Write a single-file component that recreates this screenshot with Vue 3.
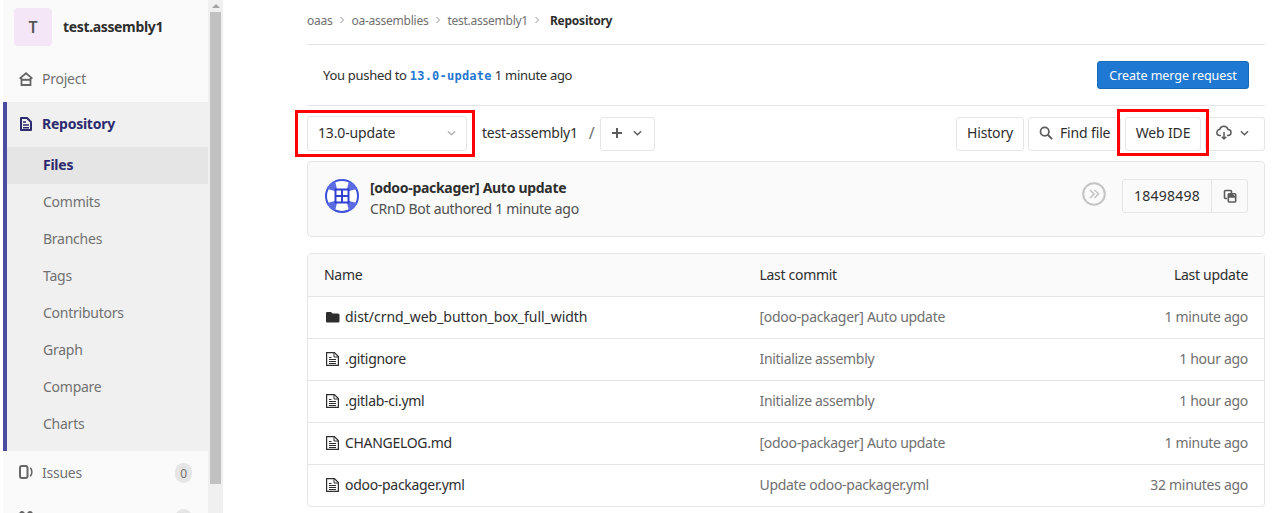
<script setup>
const subItems = ['Commits', 'Branches', 'Tags', 'Contributors', 'Graph', 'Compare', 'Charts']
const rows = [
  { name: 'dist/crnd_web_button_box_full_width', folder: true, commit: '[odoo-packager] Auto update', time: '1 minute ago' },
  { name: '.gitignore', commit: 'Initialize assembly', time: '1 hour ago' },
  { name: '.gitlab-ci.yml', commit: 'Initialize assembly', time: '1 hour ago' },
  { name: 'CHANGELOG.md', commit: '[odoo-packager] Auto update', time: '1 minute ago' },
  { name: 'odoo-packager.yml', commit: 'Update odoo-packager.yml', time: '32 minutes ago' },
]
</script>

<template>
  <div class="page">
    <aside class="sidebar">
      <div class="nav">
        <div class="context">
          <div class="avatar">T</div>
          <div class="ctx-name">test.assembly1</div>
        </div>
        <div class="item">
          <svg class="nav-icon" viewBox="0 0 14 14"><path fill="none" stroke="currentColor" stroke-width="1.8" d="M.6 6.600 7 1.200l6.400 5.400M2.500 6v7h9V6"/><path fill="currentColor" d="M3 6.800h8v2H3z"/></svg>
          <span>Project</span>
        </div>
        <div class="active-group">
          <div class="item repo">
            <svg class="nav-icon" viewBox="0 0 14 14"><path fill="none" stroke="currentColor" stroke-width="2" stroke-linejoin="round" d="M2 1h6l4 4v8H2z"/><path fill="currentColor" d="M4 7.200h6v1.600H4zM4 10h6v1.600H4zM4 4.200h3v1.600H4z"/></svg>
            <span>Repository</span>
          </div>
          <div class="sub current">Files</div>
          <div v-for="s in subItems" :key="s" class="sub">{{ s }}</div>
        </div>
        <div class="item issues">
          <svg class="nav-icon" viewBox="0 0 14 14"><rect x="1" y="1" width="7.500" height="12" rx="2" fill="none" stroke="currentColor" stroke-width="2"/><path fill="none" stroke="currentColor" stroke-width="1.500" d="M11 3c1.800.5 1.800 2 1.800 4s0 3.500-1.800 4"/></svg>
          <span>Issues</span>
          <span class="count">0</span>
        </div>
        <div class="item cut">
          <svg class="nav-icon" viewBox="0 0 14 14"><circle cx="3" cy="3" r="2" fill="none" stroke="currentColor" stroke-width="1.800"/><circle cx="11" cy="3" r="2" fill="none" stroke="currentColor" stroke-width="1.800"/></svg>
          <span>Merge Requests</span>
          <span class="count">0</span>
        </div>
      </div>
      <div class="scrollbar">
        <div class="arrow"></div>
        <div class="thumb"></div>
      </div>
    </aside>

    <main class="content">
      <nav class="crumbs">
        <span>oaas</span>
        <svg class="sep" viewBox="0 0 6 8"><path fill="none" stroke="currentColor" d="M1.500 1l3 3-3 3"/></svg>
        <span>oa-assemblies</span>
        <svg class="sep" viewBox="0 0 6 8"><path fill="none" stroke="currentColor" d="M1.500 1l3 3-3 3"/></svg>
        <span>test.assembly1</span>
        <svg class="sep" viewBox="0 0 6 8"><path fill="none" stroke="currentColor" d="M1.500 1l3 3-3 3"/></svg>
        <b>Repository</b>
      </nav>
      <div class="pushed">
        <div>You pushed to <code>13.0-update</code> 1 minute ago</div>
        <button class="merge">Create merge request</button>
      </div>
      <div class="tree-bar">
        <div class="btn select">
          <span>13.0-update</span>
          <svg class="chev light" viewBox="0 0 10 6"><path fill="none" stroke="currentColor" stroke-width="1.6" d="M1 1l4 4 4-4"/></svg>
        </div>
        <span class="path">test-assembly1</span>
        <span class="slash">/</span>
        <div class="btn plus">
          <svg class="plus-ic" viewBox="0 0 10 10"><path fill="currentColor" d="M4 0h2v4h4v2H6v4H4V6H0V4h4z"/></svg>
          <svg class="chev" viewBox="0 0 10 6"><path fill="none" stroke="currentColor" stroke-width="1.6" d="M1 1l4 4 4-4"/></svg>
        </div>
        <div class="spacer"></div>
        <div class="actions">
          <div class="btn history">History</div>
          <div class="btn find">
            <svg class="search" viewBox="0 0 16 16"><circle cx="6.500" cy="6.500" r="4.800" fill="none" stroke="currentColor" stroke-width="2"/><path stroke="currentColor" stroke-width="2.200" d="M10 10l5 5"/></svg>
            <span>Find file</span>
          </div>
          <div class="btn ide">Web IDE</div>
          <div class="btn download">
            <svg class="cloud" viewBox="0 0 16 16"><path fill="none" stroke="currentColor" stroke-width="1.500" d="M5 10.500H4a3 3 0 0 1-.3-6A4.300 4.300 0 0 1 12 4.500a3 3 0 0 1 0 6h-1"/><path fill="none" stroke="currentColor" stroke-width="1.500" d="M8 7v7M5.800 11.800 8 14l2.200-2.200"/></svg>
            <svg class="chev" viewBox="0 0 10 6"><path fill="none" stroke="currentColor" stroke-width="1.6" d="M1 1l4 4 4-4"/></svg>
          </div>
        </div>
      </div>

      <section class="commit">
        <svg class="bot" viewBox="0 0 34 34">
          <circle cx="17" cy="17" r="16" fill="#fff" stroke="#3c50dc" stroke-width="2"/>
          <path fill="#5a6be4" d="M10 12 2 10 5 5 10 2l2 8zM24 12l8-2-3-5-5-3-2 8zM10 22l-8 2 3 5 5 3 2-8zM24 22l8 2-3 5-5 3-2-8z"/>
          <path fill="#2f40d0" d="M9.500 9.500h15v15h-15z"/>
          <path fill="#fff" d="M11.500 11.500H16V16h-4.500zM18 11.500h4.500V16H18zM11.500 18H16v4.500h-4.500zM18 18h4.500v4.500H18z"/>
        </svg>
        <div class="commit-text">
          <div class="title">[odoo-packager] Auto update</div>
          <div class="author">CRnD Bot authored 1 minute ago</div>
        </div>
        <div class="spacer"></div>
        <svg class="skipped" viewBox="0 0 24 24">
          <circle cx="12" cy="12" r="10.800" fill="none" stroke="#c4c4c4" stroke-width="2"/>
          <path fill="none" stroke="#c4c4c4" stroke-width="1.6" d="M8 8l4 4-4 4M12.500 8l4 4-4 4"/>
        </svg>
        <div class="sha">
          <span class="sha-text">18498498</span>
          <span class="sha-copy">
            <svg viewBox="0 0 14 14"><path fill="none" stroke="currentColor" stroke-width="1.6" d="M4 9.500H2.500a1 1 0 0 1-1-1v-6a1 1 0 0 1 1-1h5a1 1 0 0 1 1 1V4"/><rect x="5.300" y="4.800" width="7.400" height="8.200" rx="1" fill="none" stroke="currentColor" stroke-width="1.6"/><path fill="currentColor" d="M5.300 4.800h4l3.400 3v1H5.300z"/></svg>
          </span>
        </div>
      </section>

      <section class="table">
        <div class="row head">
          <div class="c-name">Name</div>
          <div class="c-commit">Last commit</div>
          <div class="c-time">Last update</div>
        </div>
        <div v-for="r in rows" :key="r.name" class="row">
          <div class="c-name file" :class="{ folder: r.folder }">
            <svg v-if="r.folder" class="f-icon" viewBox="0 0 14 14"><path fill="#2e2e2e" d="M0 3a1 1 0 0 1 1-1h4l1.500 1.500H12a1.500 1.500 0 0 1 1.500 1.500v6a1.500 1.500 0 0 1-1.500 1.500H1a1 1 0 0 1-1-1z"/></svg>
            <svg v-else class="f-icon" viewBox="0 0 14 14"><path fill="none" stroke="#2e2e2e" stroke-width="1.200" d="M.6.6h7.800l4 4v8.800H.6z"/><path fill="none" stroke="#2e2e2e" d="M8 1v4h4M3 7.500h7M3 9.500h7M3 11.500h7M3 5.500h2.500"/></svg>
            <span>{{ r.name }}</span>
          </div>
          <div class="c-commit muted">{{ r.commit }}</div>
          <div class="c-time muted">{{ r.time }}</div>
        </div>
      </section>
    </main>
  </div>
</template>

<style>
html, body { margin: 0; height: 513px; overflow: hidden; background: #fff; }
</style>

<style scoped>
.page {
  display: flex;
  width: 1274px;
  height: 513px;
  overflow: hidden;
  font-family: "Noto Sans", "Open Sans", sans-serif;
  font-size: 14px;
  color: #2e2e2e;
  background: #fff;
}
.sidebar {
  flex: 0 0 220px;
  margin-left: 3px;
  display: flex;
  height: 513px;
  overflow: hidden;
}
.nav { width: 205px; background: #fafafa; flex: none; letter-spacing: -0.25px; }
.scrollbar { width: 15px; background: #f0f0f0; flex: none; padding-left: 2px; box-sizing: border-box; }
.arrow { width: 0; height: 0; margin: 4px 0 0 1.500px; border: 4px solid transparent; border-top: 0; border-bottom: 4px solid #a3a3a3; }
.thumb { width: 11px; margin-top: 4px; height: 472px; background: #c1c1c1; }
.context { display: flex; align-items: flex-start; height: 55px; box-sizing: border-box; padding: 8px 0 0 11px; }
.avatar {
  width: 38px; height: 38px; background: #f4e6f7; border-radius: 4px;
  display: flex; align-items: center; justify-content: center;
  font-size: 16px; font-weight: 600; color: #555; margin-right: 11px;
}
.ctx-name { font-weight: 700; color: #2e2e2e; line-height: 38px; letter-spacing: -0.35px; }
.item { display: flex; align-items: center; height: 47px; box-sizing: border-box; padding-left: 16px; color: #707070; }
.item span:first-of-type { margin-left: 9px; }
.nav-icon { width: 14px; height: 14px; flex: none; color: #666; }
.active-group { background: #f0f0f0; border-left: 4px solid #4b4ba3; }
.repo { padding-left: 12px; padding-bottom: 2px; height: 45px; color: #2d2a6e; font-weight: 700; }
.repo .nav-icon { color: #2d2a6e; }
.sub { height: 37px; box-sizing: border-box; padding-bottom: 2px; display: flex; align-items: center; padding-left: 36px; color: #707070; }
.sub.current { background: #e5e5e5; color: #2d2a6e; font-weight: 700; }
.active-group .sub:last-child { height: 45px; padding-bottom: 10px; }
.issues { height: 44px; padding-bottom: 2px; }
.count {
  margin-left: auto; margin-right: 16px; margin-top: 2px; background: #e5e5e5; border-radius: 9px;
  width: 17px; height: 20px; display: flex; align-items: center; justify-content: center;
  font-size: 12px; color: #707070;
}
.cut { height: 46px; }

.content { flex: 0 0 958px; margin-left: 84px; box-sizing: border-box; letter-spacing: -0.3px; width: 958px; }
.crumbs {
  display: flex; align-items: center; height: 40px; padding-bottom: 4px; border-bottom: 1px solid #e5e5e5;
  font-size: 12px; color: #707070; letter-spacing: -0.25px;
}
.sep { width: 6px; height: 8px; margin: 0 6.500px; color: #8f8f8f; flex: none; }
.crumbs b { color: #2e2e2e; font-weight: 700; margin-left: 3px; }
.pushed {
  display: flex; align-items: center; justify-content: space-between;
  height: 60px; padding: 0 16px; border-bottom: 1px solid #e5e5e5; font-size: 13px;
}
.pushed code { font-family: "DejaVu Sans Mono", monospace; font-size: 12px; font-weight: 700; color: #1f78d1; letter-spacing: 0.23px; }
.merge {
  width: 152px; height: 28px; background: #1f78d1; border: 1px solid #1b69b6; border-radius: 3px;
  color: #fff; font: 12.500px "Noto Sans", sans-serif; padding: 0; letter-spacing: -0.05px;
}
.tree-bar { display: flex; align-items: center; height: 55px; letter-spacing: -0.15px; }
.spacer { flex: 1; }
.btn {
  height: 34px; box-sizing: border-box; background: #fff; border: 1px solid #e5e5e5; border-radius: 3px;
  display: flex; align-items: center; padding: 0 11px 2px; white-space: nowrap; flex: none;
}
.select { position: relative; width: 160px; height: 35px; justify-content: space-between; padding: 0 10px 2px 10px; }
.select::after { content: ""; position: absolute; left: -13px; right: -9px; top: -7px; bottom: -7px; border: 3px solid #f00; pointer-events: none; }
.chev { width: 9px; height: 6px; color: #5c5c5c; flex: none; }
.chev.light { color: #b5b5b5; }
.path { margin-left: 15px; margin-bottom: 2px; letter-spacing: -0.22px; }
.slash { width: 5px; margin: 0 6px 2px 11px; color: #707070; font-size: 16px; }
.plus { width: 55px; justify-content: space-between; padding: 0 12px 2px 11px; }
.plus-ic { width: 10px; height: 10px; color: #5c5c5c; flex: none; }
.actions { display: flex; gap: 4px; }
.history { width: 68px; justify-content: center; padding: 0 0 2px; }
.find { width: 93px; padding: 0 0 2px 10px; gap: 7px; }
.search { width: 14px; height: 14px; color: #5c5c5c; flex: none; }
.ide { position: relative; width: 76px; justify-content: center; padding: 0 0 2px; }
.ide::after { content: ""; position: absolute; left: -9px; right: -9px; top: -9px; bottom: -6px; border: 3px solid #f00; pointer-events: none; }
.download { width: 60px; padding: 0 15px 2px 10px; justify-content: space-between; }
.cloud { width: 16px; height: 16px; color: #5c5c5c; flex: none; }
.commit {
  display: flex; align-items: flex-start; height: 76px; box-sizing: border-box; background: #fafafa;
  border: 1px solid #e5e5e5; border-radius: 4px; padding: 0 16px 0 17px;
}
.bot { width: 34px; height: 34px; flex: none; margin: 17px 11px 0 0; }
.commit-text { padding-top: 15px; }
.title { font-weight: 700; line-height: 21px; }
.author { line-height: 21px; color: #4f4f4f; }
.skipped { width: 24px; height: 24px; margin: 20px 16px 0 0; flex: none; }
.sha { display: flex; height: 34px; margin-top: 17px; border: 1px solid #e5e5e5; border-radius: 3px; box-sizing: border-box; background: #fafafa; }
.sha-text { width: 89px; padding-bottom: 2px; box-sizing: border-box; display: flex; align-items: center; justify-content: center; border-right: 1px solid #e5e5e5; letter-spacing: 0.25px; }
.sha-copy { width: 35px; display: flex; align-items: center; justify-content: center; color: #5c5c5c; }
.sha-copy svg { width: 14px; height: 14px; }
.table { margin-top: 16px; border: 1px solid #e5e5e5; border-radius: 4px; }
.row { display: flex; align-items: center; height: 42px; box-sizing: border-box; border-bottom: 1px solid #e5e5e5; padding: 0 16px 2px; }
.row:last-child { border-bottom: 0; height: 41px; }
.row.head { height: 43px; background: #fafafa; }
.c-name { width: 435.500px; flex: none; }
.c-commit { width: 300px; flex: none; }
.c-time { flex: 1; text-align: right; }
.file { display: flex; align-items: center; gap: 5px; }
.folder { letter-spacing: -0.04px; }
.f-icon { width: 14px; height: 14px; flex: none; margin-left: 2px; }
.muted { color: #707070; }
</style>
